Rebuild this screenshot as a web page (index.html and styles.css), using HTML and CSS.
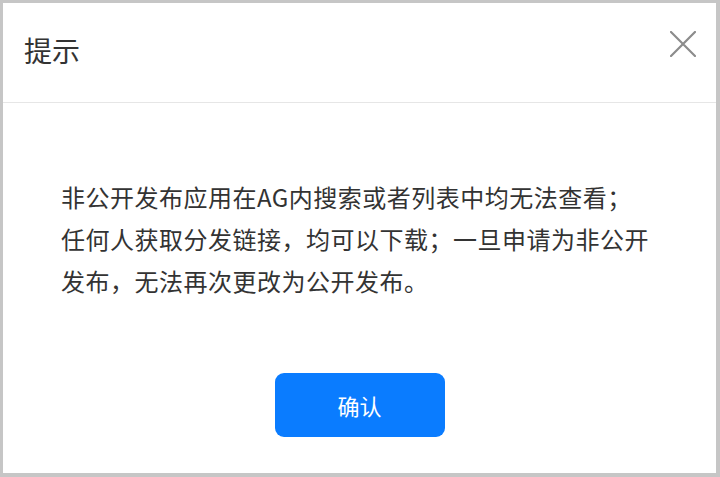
FILE: index.html
```html
<!DOCTYPE html>
<html lang="zh-CN">
<head>
<meta charset="utf-8">
<title>提示</title>
<link rel="stylesheet" href="styles.css">
</head>
<body>
<div class="dialog">
  <div class="header">
    <div class="title">提示</div>
    <svg class="close" width="26" height="26" viewBox="0 0 26 26" aria-label="关闭">
      <path d="M1 1 L25 25 M25 1 L1 25" stroke="#8c8c8c" stroke-width="2.2" fill="none" stroke-linecap="square"/>
    </svg>
  </div>
  <div class="body">
    <p class="message">非公开发布应用在AG内搜索或者列表中均无法查看；<br>任何人获取分发链接，均可以下载；一旦申请为非公开<br>发布，无法再次更改为公开发布。</p>
    <button class="confirm">确认</button>
  </div>
</div>
</body>
</html>
```
FILE: styles.css
```css
html, body {
  margin: 0;
  padding: 0;
  background: #ffffff;
}
body {
  font-family: "Noto Sans CJK SC", "Noto Sans", sans-serif;
}
.dialog {
  box-sizing: border-box;
  width: 720px;
  height: 477px;
  border-style: solid;
  border-color: #c6c6c6;
  border-width: 3px 4px 4px 3px;
  background: #ffffff;
  display: flex;
  flex-direction: column;
}
.header {
  box-sizing: border-box;
  height: 100px;
  border-bottom: 1px solid #e6e6e6;
  display: flex;
  justify-content: space-between;
  align-items: flex-start;
  padding: 0 20px 0 21px;
}
.title {
  font-size: 28px;
  line-height: 28px;
  margin-top: 33px;
  color: #333333;
}
.close {
  margin-top: 28px;
  display: block;
}
.body {
  display: flex;
  flex-direction: column;
  align-items: center;
  padding-top: 73px;
}
.message {
  align-self: stretch;
  margin: 0;
  padding-left: 58px;
  font-size: 24px;
  line-height: 42px;
  letter-spacing: 0.5px;
  color: #333333;
  white-space: nowrap;
}
.confirm {
  margin-top: 71px;
  width: 170px;
  height: 64px;
  border: none;
  border-radius: 9px;
  background: #0a7cff;
  color: #ffffff;
  font-family: "Noto Sans CJK SC", "Noto Sans", sans-serif;
  font-size: 22px;
  padding: 0;
}
```
